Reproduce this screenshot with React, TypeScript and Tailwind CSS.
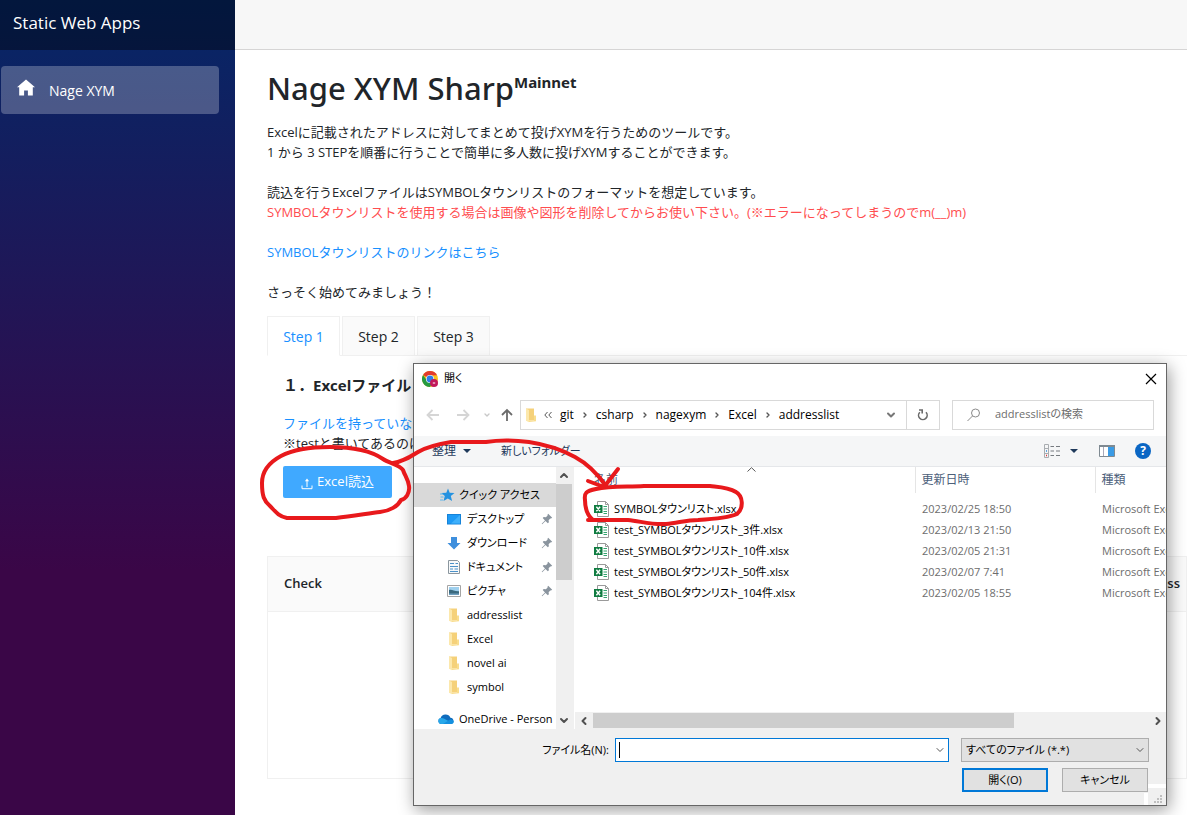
import React from 'react';
import { ChevronDown, ChevronLeft, ChevronRight, ChevronUp } from 'lucide-react';

interface FileEntry {
  name: string;
  modified: string;
}

interface PlaceEntry {
  label: string;
  icon: React.ReactNode;
  pinned?: boolean;
}

const files: FileEntry[] = [
  { name: 'SYMBOLタウンリスト.xlsx', modified: '2023/02/25 18:50' },
  { name: 'test_SYMBOLタウンリスト_3件.xlsx', modified: '2023/02/13 21:50' },
  { name: 'test_SYMBOLタウンリスト_10件.xlsx', modified: '2023/02/05 21:31' },
  { name: 'test_SYMBOLタウンリスト_50件.xlsx', modified: '2023/02/07 7:41' },
  { name: 'test_SYMBOLタウンリスト_104件.xlsx', modified: '2023/02/05 18:55' },
];

const crumbs = ['git', 'csharp', 'nagexym', 'Excel', 'addresslist'];

const HomeIcon = () => (
  <svg className="h-5 w-5" viewBox="0 0 20 20" fill="#fff">
    <path d="M10 1.5 1 9.2h2.2v8.3h4.9v-4.9h3.8v4.9h4.9V9.2H19z" />
  </svg>
);

const UploadIcon = () => (
  <svg className="mt-1 h-3 w-3" viewBox="0 0 12 12" fill="none" stroke="#fff">
    <path d="M1 7.5v3.2h10V7.5M6 9V2" />
    <path d="M6 .6 3.9 3.2h4.2z" fill="#fff" stroke="none" />
  </svg>
);

const ChromeIcon = () => (
  <svg className="h-4 w-4" viewBox="0 0 16 16">
    <circle cx="8" cy="8" r="8" fill="#f9c31c" />
    <path d="M8 8 1.07 4A8 8 0 0 1 15 4.2L8 4.6z" fill="#e33b2e" />
    <path d="M1.07 4A8 8 0 0 0 8 16l3-6-3-1.2-3 .9z" fill="#269a42" />
    <circle cx="8" cy="8" r="4" fill="#fff" />
    <circle cx="8" cy="8" r="3.4" fill="#2f7de9" />
    <circle cx="12" cy="12" r="4" fill="#c2185b" />
    <path d="M10.8 12h2.4" stroke="#fff" />
  </svg>
);

const FolderIcon = () => (
  <svg className="h-4 w-4" viewBox="0 0 16 16">
    <path d="M3 1.5h8v12H3z" fill="#f5d17a" />
    <path d="M3 1.5 6 3v12.2L3 13.8z" fill="#fce8ac" />
    <path d="M11 8.5h2v5.7L6 15V13.5h5z" fill="#f9dd8d" />
  </svg>
);

const StarIcon = () => (
  <svg className="h-4 w-4" viewBox="0 0 16 16">
    <path d="m9 1.500 1.700 4.300 4.800.1-3.700 3 1.300 5.200-4.300-2.700-4.300 2.700 1.300-5L2.300 5.900l5-.2z" fill="#2492e0" />
    <path d="M1 7h3M1.500 10h3M1 13h3" stroke="#5cb8ee" />
  </svg>
);

const DesktopIcon = () => (
  <svg className="h-4 w-4" viewBox="0 0 16 16">
    <path d="M1 3h14v10.5H1z" fill="#1683d8" />
    <path d="M2 4h12v8.5H2z" fill="#1e9af5" />
    <path d="M14 4v8.5H5z" fill="#3fb0fb" />
  </svg>
);

const DownloadIcon = () => (
  <svg className="h-4 w-4" viewBox="0 0 16 16">
    <path d="M5 2h6v6h3.500L8 14.500 1.500 8H5z" fill="#3e8fdd" />
  </svg>
);

const DocumentIcon = () => (
  <svg className="h-4 w-4" viewBox="0 0 16 16">
    <path d="M2.5 1.5h9l2 2v11h-11z" fill="#f7f9fa" stroke="#8b969e" />
    <path d="M4 4.5h4M9.5 4.5H12M4 7.5h8M4 10h3M8.5 10H12M4 12.5h8" stroke="#4b91c9" />
  </svg>
);

const PictureIcon = () => (
  <svg className="h-4 w-4" viewBox="0 0 16 16">
    <path d="M1.5 2.5h13v11h-13z" fill="#fff" stroke="#a4a4a4" />
    <path d="M3 4h10v8H3z" fill="#9fd0ee" />
    <path d="M3 7c3-1 5 1.500 10 1.200V12H3z" fill="#3b6a7f" />
    <path d="M3 10.500h10V12H3z" fill="#6f9fbf" />
  </svg>
);

const CloudIcon = () => (
  <svg className="h-4 w-4" viewBox="0 0 16 16">
    <path d="M3 13a3 3 0 0 1-.4-5.9A5.2 5.2 0 0 1 12.4 6.7 3.2 3.2 0 0 1 13 13z" fill="#0f6cbd" />
    <path d="M3 13a3 3 0 0 1-.4-5.9c2-.5 3.400.4 5.400 1.700l6.800 3.300c-.5.600-1.100.9-1.800.9z" fill="#28a8ea" />
    <path d="M5 13 12 8.500c3-.6 4 1.500 3.800 2.500-.2 1-1.300 2-2.800 2z" fill="#1490df" />
  </svg>
);

const PinIcon = () => (
  <svg className="h-3 w-3" viewBox="0 0 12 12" fill="#8a949e">
    <path d="m7.2.8 4 4-1.200.7-.7-.1-1.700 1.800.3 2.100-1.100 1L4.500 8 1.200 11.200l-.5-.4L4 7.400 1.700 5l1-1.100 2.200.3 1.700-1.700-.1-.8z" />
  </svg>
);

const ExcelIcon = () => (
  <svg className="h-4 w-4" viewBox="0 0 16 16">
    <path d="M3.5.5h8l3 3v12h-11z" fill="#fff" stroke="#9a9a9a" />
    <path d="M11.5.5v3h3" fill="none" stroke="#9a9a9a" />
    <path d="M9.5 5.5H13M9.5 8H13M9.5 10.5H13M9.5 12.5H13" stroke="#33a56f" />
    <path d="M0 4h8.500v8H0z" fill="#107c41" />
    <path d="m2.400 5.800 3.700 4.400M6.100 5.800l-3.700 4.400" stroke="#fff" strokeWidth="1.400" />
  </svg>
);

const Arrow: React.FC<{ d: string; stroke: string }> = ({ d, stroke }) => (
  <svg className="h-4 w-4" viewBox="0 0 16 16" fill="none" stroke={stroke} strokeWidth="1.800">
    <path d={d} />
  </svg>
);

const places: PlaceEntry[] = [
  { label: 'デスクトップ', icon: <DesktopIcon />, pinned: true },
  { label: 'ダウンロード', icon: <DownloadIcon />, pinned: true },
  { label: 'ドキュメント', icon: <DocumentIcon />, pinned: true },
  { label: 'ピクチャ', icon: <PictureIcon />, pinned: true },
  { label: 'addresslist', icon: <FolderIcon /> },
  { label: 'Excel', icon: <FolderIcon /> },
  { label: 'novel ai', icon: <FolderIcon /> },
  { label: 'symbol', icon: <FolderIcon /> },
];

const Sidebar = () => (
  <aside className="w-[235px] shrink-0 bg-[linear-gradient(180deg,#052767_0%,#3a0647_70%)] text-white">
    <div className="flex h-[50px] items-center bg-black/40 px-[13px] pb-1 text-[17px]">
      <a href="#">Static Web Apps</a>
    </div>
    <nav className="mt-4 pr-4 pl-px">
      <a href="#" className="flex h-12 items-center gap-[13px] rounded bg-white/25 px-[15px] text-[14px]">
        <span className="pb-1"><HomeIcon /></span>
        Nage XYM
      </a>
    </nav>
  </aside>
);

const PlacesPane = () => (
  <div className="flex w-[158px] shrink-0 bg-white">
    <div className="min-w-0 flex-1 overflow-hidden pt-4">
      <div className="flex h-6 items-center gap-1 bg-[#d9d9d9] pl-[25px]">
        <StarIcon />
        <span className="whitespace-nowrap">クイック アクセス</span>
      </div>
      <ul>
        {places.map((place) => (
          <li key={place.label} className="flex h-6 items-center gap-[5px] pr-[3px] pl-8">
            {place.icon}
            <span className="flex-1 whitespace-nowrap">{place.label}</span>
            {place.pinned && <PinIcon />}
          </li>
        ))}
      </ul>
      <div className="mt-2 flex h-6 items-center gap-[5px] pl-6">
        <span className="shrink-0"><CloudIcon /></span>
        <span className="whitespace-nowrap">OneDrive - Person</span>
      </div>
    </div>
    <div className="flex w-4 flex-col items-center bg-[#f0f0f0] text-[#505050]">
      <ChevronUp className="h-[17px] w-3" strokeWidth={4} />
      <div className="h-24 w-full bg-[#cdcdcd]" />
      <ChevronDown className="mt-auto h-[17px] w-3" strokeWidth={4} />
    </div>
  </div>
);

const FilesPane = () => (
  <div className="flex min-w-0 flex-1 flex-col overflow-hidden border-l-2 border-[#f0f0f0] bg-white">
    <div className="relative min-h-0 flex-1 overflow-hidden">
      <svg
        className="absolute top-0 left-[173px] h-[5px] w-[9px]"
        viewBox="0 0 9 5"
        fill="none"
        stroke="#555"
      >
        <path d="M.5 4.500 4.500.7l4 3.800" />
      </svg>
      <table className="w-full table-fixed">
        <colgroup>
          <col />
          <col className="w-[180px]" />
          <col className="w-[71px]" />
        </colgroup>
        <thead>
          <tr className="h-[26px] text-left text-[12px] text-[#4c607a]">
            <th className="pl-5 font-normal">名前</th>
            <th className="border-l border-[#e5e5e5] pl-[6px] font-normal">更新日時</th>
            <th className="border-l border-[#e5e5e5] pl-[6px] font-normal">種類</th>
          </tr>
        </thead>
        <tbody>
          <tr className="h-[5px]" />
          {files.map((file) => (
            <tr key={file.name} className="h-[21px] leading-[21px] text-[#6d6d6d]">
              <td className="p-0 pl-5">
                <span className="flex items-center gap-1 text-black">
                  <ExcelIcon />
                  <span className="whitespace-nowrap">{file.name}</span>
                </span>
              </td>
              <td className="p-0 pl-[7px]">{file.modified}</td>
              <td className="overflow-hidden p-0 pl-[7px] whitespace-nowrap">Microsoft Excel</td>
            </tr>
          ))}
        </tbody>
      </table>
    </div>
    <div className="ml-px flex h-[17px] items-center bg-[#f0f0f0] text-[#505050]">
      <ChevronLeft className="h-3 w-[18px]" strokeWidth={4} />
      <div className="h-[15px] w-[421px] bg-[#cdcdcd]" />
      <ChevronRight className="ml-auto h-3 w-4" strokeWidth={4} />
    </div>
  </div>
);

const FileDialog = () => (
  <section
    role="dialog"
    aria-label="開く"
    className="absolute top-[363px] left-[413px] flex h-[443px] w-[754px] flex-col border border-[#666] bg-white font-['Open_Sans','Noto_Sans_CJK_JP',sans-serif] text-[11px] text-black shadow-[2px_4px_16px_rgba(0,0,0,0.4)] [font-feature-settings:'palt']"
  >
    <div className="flex h-[29px] items-center gap-[6px] px-2">
      <ChromeIcon />
      <span>開く</span>
      <button type="button" aria-label="閉じる" className="ml-auto">
        <svg className="h-4 w-4" viewBox="0 0 16 16" stroke="#000" strokeWidth="1.200">
          <path d="m4 3 10 10M14 3 4 13" />
        </svg>
      </button>
    </div>
    <div className="flex h-[43px] items-center pr-3 pl-[11px]">
      <div className="flex w-[95px] items-center">
        <Arrow d="M14 8H2.5M7.5 3 2.5 8l5 5" stroke="#d5d5d5" />
        <span className="ml-[14px]"><Arrow d="M2 8h11.5M8.5 3l5 5-5 5" stroke="#d5d5d5" /></span>
        <ChevronDown className="ml-3 h-2 w-2 text-[#c8c8c8]" strokeWidth={4} />
        <span className="ml-2"><Arrow d="M8 14V3M3 8l5-5 5 5" stroke="#6b6b6b" /></span>
      </div>
      <div className="flex h-[30px] flex-1 items-center border border-[#d9d9d9] pl-[2px]">
        <FolderIcon />
        <svg className="mr-2 ml-[5px] h-2 w-2" viewBox="0 0 8 8" fill="none" stroke="#555">
          <path d="M3.500 1 .8 4l2.700 3M7.500 1 4.800 4l2.700 3" />
        </svg>
        {crumbs.map((crumb, i) => (
          <React.Fragment key={crumb}>
            {i > 0 && <ChevronRight className="mx-[7px] h-2 w-2 text-[#555]" strokeWidth={4} />}
            <span className="text-[12px]">{crumb}</span>
          </React.Fragment>
        ))}
        <ChevronDown className="mr-[9px] ml-auto h-3 w-3 text-[#777]" strokeWidth={4} />
        <button type="button" aria-label="更新" className="flex h-full w-[33px] items-center justify-center border-l border-[#d9d9d9]">
          <svg className="h-3 w-3" viewBox="0 0 12 12" fill="none" stroke="#6b6b6b" strokeWidth="1.600">
            <path d="M2.800 3.200A4.300 4.300 0 1 0 9 3.300" />
            <path d="M2 1h3.200v3.500" />
          </svg>
        </button>
      </div>
      <label className="ml-3 flex h-[30px] w-[202px] items-center gap-[13px] border border-[#d9d9d9] pl-[13px]">
        <svg className="h-4 w-4 shrink-0" viewBox="0 0 16 16" fill="none" stroke="#8a8a8a">
          <circle cx="9.500" cy="6" r="4" />
          <path d="m6.500 9-5 5" />
        </svg>
        <input
          type="text"
          aria-label="検索"
          placeholder="addresslistの検索"
          className="w-full min-w-0 outline-none placeholder:text-[#6d6d6d]"
        />
      </label>
    </div>
    <div className="flex h-[31px] items-center border-b border-[#e5e7ea] bg-[#f5f6f7] pr-[15px] pl-[18px] text-[#1e395b]">
      <button type="button" className="flex items-center gap-[7px] text-[12px]">
        整理
        <svg className="h-1 w-2" viewBox="0 0 8 4" fill="#1e395b"><path d="M0 0h8L4 4z" /></svg>
      </button>
      <button type="button" className="ml-[30px]">新しいフォルダー</button>
      <button type="button" aria-label="表示" className="ml-auto flex items-center gap-[9px]">
        <svg className="h-4 w-[18px]" viewBox="0 0 18 16" fill="none">
          <path d="M1.500 1.500h4v13h-4zM1.500 5.500h4M1.500 10.500h4" stroke="#a9adb1" />
          <path d="M7.500 3.500H11M13 3.500h4M7.500 8H11M13 8h4M7.500 12.500H11M13 12.500h4" stroke="#767b80" />
          <path d="M3 8h1" stroke="#2e8ad8" strokeWidth="1.500" />
          <path d="M3 12.500h1" stroke="#d33" strokeWidth="1.500" />
        </svg>
        <svg className="h-1 w-2" viewBox="0 0 8 4" fill="#1e395b"><path d="M0 0h8L4 4z" /></svg>
      </button>
      <button type="button" aria-label="プレビュー" className="ml-[21px]">
        <svg className="h-3 w-4" viewBox="0 0 16 12">
          <path d="M.5.5h15v11H.5z" fill="#fff" stroke="#7f8a92" />
          <path d="M0 0h16v2H0z" fill="#7f8a92" />
          <path d="M4.500 2v9" stroke="#aab" />
          <path d="M9 2h6v9H9z" fill="#3a9be5" />
        </svg>
      </button>
      <button
        type="button"
        aria-label="ヘルプ"
        className="ml-5 h-4 w-4 rounded-full bg-[#0a66c4] text-[12px] leading-4 font-bold text-white"
      >
        ?
      </button>
    </div>
    <div className="flex min-h-0 flex-1">
      <PlacesPane />
      <FilesPane />
    </div>
    <form className="flex h-[76px] flex-col gap-[6px] bg-[#f0f0f0] pt-[9px] pr-[17px]">
      <div className="flex h-6 items-center">
        <label htmlFor="filename" className="w-[201px] pr-[6px] text-right">ファイル名(N):</label>
        <div className="relative h-6 flex-1">
          <input id="filename" type="text" className="h-6 w-full border border-[#0078d7] bg-white px-1 outline-none" />
          <span className="absolute top-1 left-1 h-4 w-px bg-black" />
          <ChevronDown className="absolute top-[6px] right-[3px] h-3 w-3 text-[#555]" />
        </div>
        <div className="relative ml-3 w-[188px]">
          <select aria-label="ファイルの種類" className="h-6 w-full appearance-none border border-[#adadad] bg-[#e1e1e1] px-1">
            <option>すべてのファイル (*.*)</option>
          </select>
          <ChevronDown className="absolute top-[6px] right-[3px] h-3 w-3 text-[#555]" />
        </div>
      </div>
      <div className="flex justify-end gap-[14px] pr-px">
        <button type="submit" className="h-6 w-[86px] border-2 border-[#0078d7] bg-[#e1e1e1]">開く(O)</button>
        <button type="button" className="h-6 w-[86px] border border-[#adadad] bg-[#e1e1e1]">キャンセル</button>
      </div>
    </form>
    <svg className="absolute right-0 bottom-0 h-[21px] w-[22px]" viewBox="0 0 22 21">
      <path d="M4 0h18v4H4zM0 9h4v12H0z" fill="#fff" />
      <path d="M4 4h18v17H4z" fill="#f0f0f0" />
      <path d="M16 11h2v2h-2zM16 14h2v2h-2zM13 14h2v2h-2zM16 17h2v2h-2zM13 17h2v2h-2zM10 17h2v2h-2z" fill="#bfbfbf" />
    </svg>
  </section>
);

// Hand-drawn pen marks lying over the page and the dialog
const PenMarks = () => (
  <svg
    className="pointer-events-none absolute top-0 left-0 h-[815px] w-[1187px]"
    viewBox="0 0 1187 815"
    fill="none"
    stroke="#e8191c"
    strokeWidth="4"
    strokeLinecap="round"
    strokeLinejoin="round"
  >
    <path d="M401 500c5-1 9-7 8-14s-4-10-6-16c-3-5-14-7-20-11-13-9-30-12-53-12-20 0-36 2-49 9-13 7-19 16-19 27 0 13 2 18 8 23 5 5 8 10 17 12h49c17-2 35-5 44-6 10-1 18-6 21-12" />
    <path d="M393 463c9-1 17-6 25-11 10-6 21-8 33-10h35c13-2 27-2 43 0 20 3 35 9 46 15 13 7 22 16 31 29" />
    <path d="m588 481 16 6 14-18" />
    <path d="M588 520h40c12 1 23 5 38 4 12-1 20-4 32-4 16-1 30-2 39-6 7-6 6-18-1-22-8-5-17-5-26-6h-66c-18 1-34 0-48 3-10 2-12 4-11 11 0 9 3 16 8 20" />
  </svg>
);

export default function App() {
  return (
    <div className="relative flex h-screen overflow-hidden bg-white font-['Open_Sans','Noto_Sans_CJK_JP',sans-serif] text-[13px] text-[#212529]">
      <Sidebar />
      <main className="min-w-0 flex-1">
        <div className="h-[50px] border-b border-[#d6d5d5] bg-[#f7f7f7]" />
        <div className="pl-8">
          <h1 className="pt-[18px] font-['Noto_Sans',sans-serif] text-[31px] leading-10 font-medium">
            Nage XYM Sharp<sup className="-top-3 text-[15px] font-bold">Mainnet</sup>
          </h1>
          <div className="mt-[14px] leading-5">
            <p>Excelに記載されたアドレスに対してまとめて投げXYMを行うためのツールです。</p>
            <p>1 から 3 STEPを順番に行うことで簡単に多人数に投げXYMすることができます。</p>
            <p className="mt-5">読込を行うExcelファイルはSYMBOLタウンリストのフォーマットを想定しています。</p>
            <p className="text-[#ff4d4f]">
              SYMBOLタウンリストを使用する場合は画像や図形を削除してからお使い下さい。(※エラーになってしまうのでm(__)m)
            </p>
            <p className="mt-5"><a href="#" className="text-[#1890ff]">SYMBOLタウンリストのリンクはこちら</a></p>
            <p className="mt-5">さっそく始めてみましょう！</p>
          </div>

          <div role="tablist" className="mt-[14px] flex gap-[2px] border-b border-[#f0f0f0] text-[14px]">
            <button type="button" role="tab" aria-selected="true" className="-mb-px h-10 w-[73px] border border-b-white border-[#f0f0f0] bg-white text-[#1890ff]">Step 1</button>
            <button type="button" role="tab" aria-selected="false" className="-mb-px h-10 w-[73px] border border-[#f0f0f0] bg-[#fafafa]">Step 2</button>
            <button type="button" role="tab" aria-selected="false" className="-mb-px h-10 w-[73px] border border-[#f0f0f0] bg-[#fafafa]">Step 3</button>
          </div>

          <div className="px-4 pt-[15px]">
            <h2 className="text-[15px] leading-7 font-bold">１．Excelファイル</h2>
            <div className="mt-[14px] leading-5">
              <p><a href="#" className="text-[#1890ff]">ファイルを持っていない</a></p>
              <p>※testと書いてあるのは</p>
            </div>
            <button type="button" className="mt-[13px] flex h-8 w-[109px] items-center justify-center gap-1 rounded-[2px] bg-[#40a9ff] text-white">
              <UploadIcon />
              Excel読込
            </button>
          </div>

          <table className="mt-[58px] w-full border border-[#f0f0f0]">
            <thead>
              <tr className="h-[55px] border-b border-[#f0f0f0] bg-[#fafafa]">
                <th className="pl-4 text-left font-semibold">Check</th>
                <th className="pr-[6px] text-right font-semibold">Address</th>
              </tr>
            </thead>
            <tbody>
              <tr className="h-[167px]">
                <td colSpan={2} />
              </tr>
            </tbody>
          </table>
        </div>
      </main>
      <FileDialog />
      <PenMarks />
    </div>
  );
}
